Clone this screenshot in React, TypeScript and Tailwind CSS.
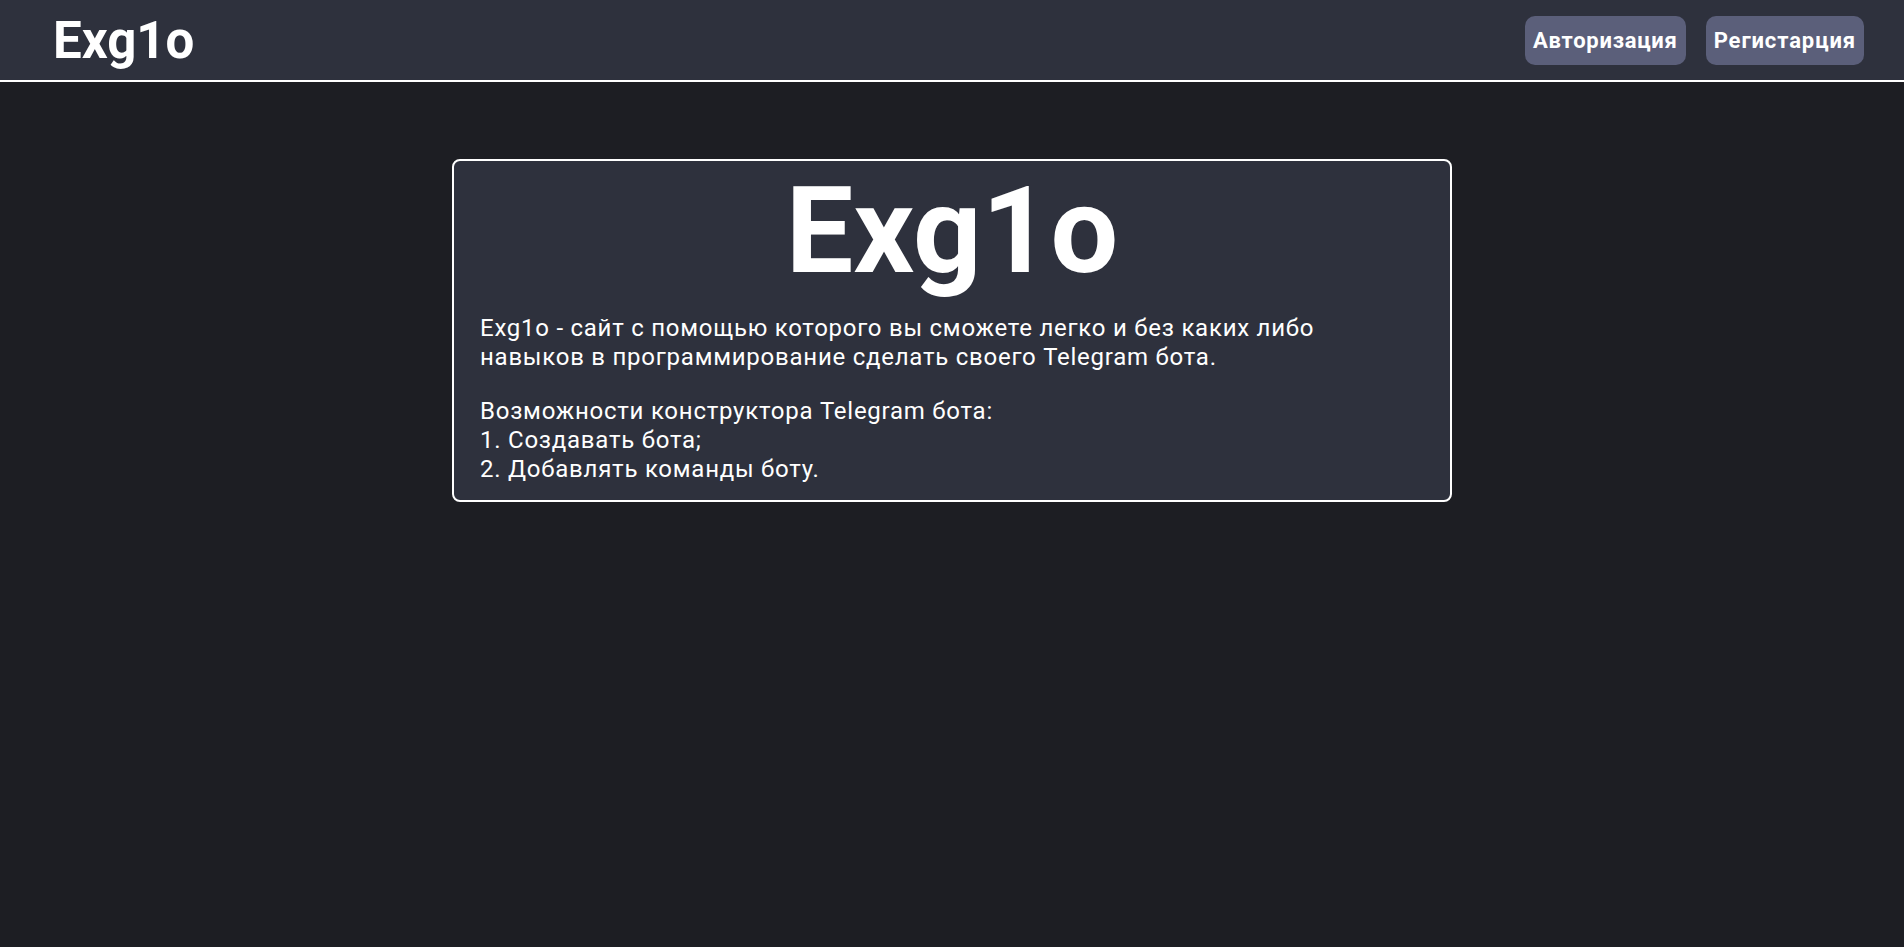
export default function App() {
  return (
    <div className="min-h-screen bg-[#1d1e23] text-white font-['Roboto',sans-serif]">
      {/* Header */}
      <header className="flex h-[82px] items-center justify-between border-b-2 border-white bg-[#2e313d] pl-[53px] pr-[40px]">
        <div className="text-[51px] font-bold leading-[normal]">Exg1o</div>
        <nav className="flex gap-5">
          <button className="h-[49px] rounded-[10px] bg-[#5b5f7a] px-2 text-[22px] font-bold tracking-[0.75px]">
            Авторизация
          </button>
          <button className="h-[49px] rounded-[10px] bg-[#5b5f7a] px-2 text-[22px] font-bold tracking-[0.9px]">
            Регистарция
          </button>
        </nav>
      </header>

      {/* Intro card */}
      <main className="flex justify-center pt-[77px]">
        <section className="w-[1000px] rounded-lg border-2 border-white bg-[#2e313d] px-[26px] pb-[16px]">
          <h1 className="text-center text-[120px] font-bold leading-[normal]">Exg1o</h1>
          <p className="mt-[13px] text-2xl leading-[29px] tracking-[0.75px]">
            Exg1o - сайт с помощью которого вы сможете легко и без каких либо
            <br />
            навыков в программирование сделать своего Telegram бота.
          </p>
          <p className="mt-[25px] text-2xl leading-[29px] tracking-[0.75px]">
            Возможности конструктора Telegram бота:
            <br />
            1. Создавать бота;
            <br />
            2. Добавлять команды боту.
          </p>
        </section>
      </main>
    </div>
  );
}
